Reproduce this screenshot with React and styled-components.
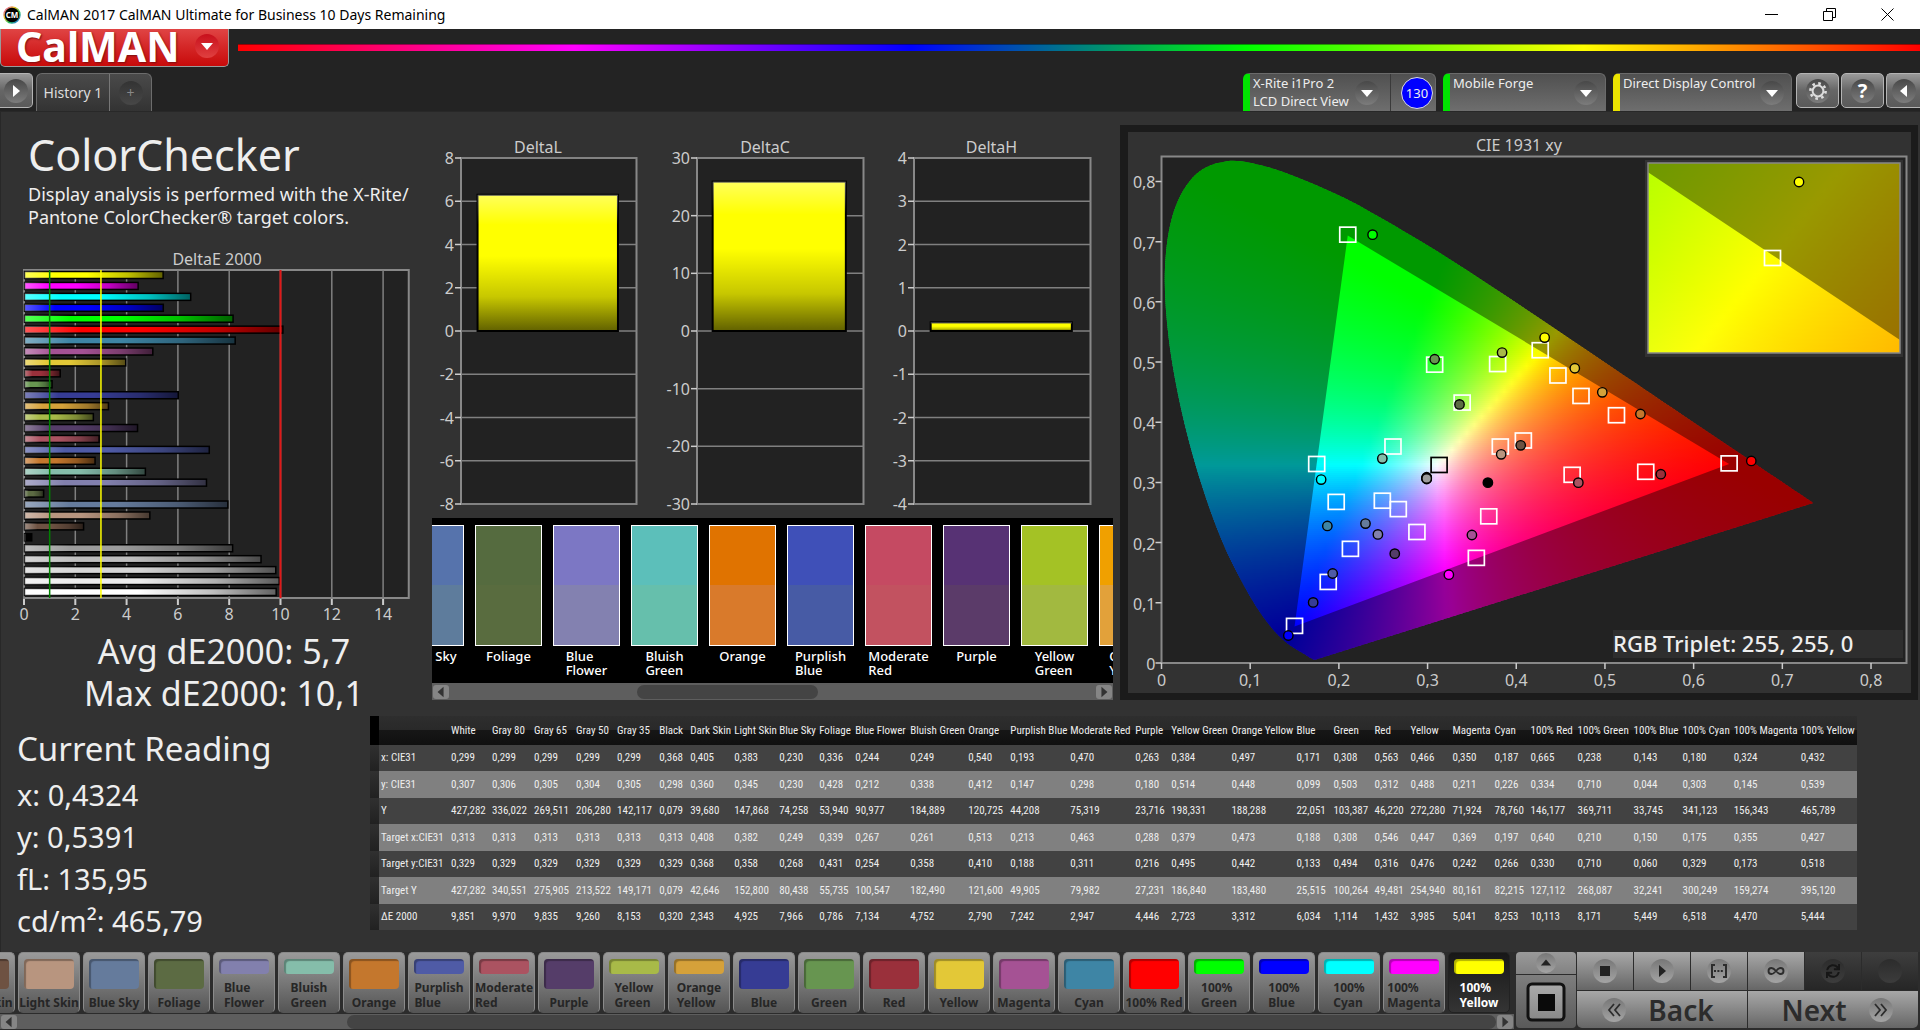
import React, {useState} from 'react';
import styled, {createGlobalStyle, css} from 'styled-components';
import {Infinity as InfinityIcon} from 'lucide-react';
import {FaSync} from 'react-icons/fa';

const GlobalStyle = createGlobalStyle`
* {
  box-sizing: border-box;
}
body {
  margin: 0;
  background: #232323;
  color: #eee;
  font-family: "Noto Sans", "Open Sans", sans-serif;
}
button {
  margin: 0;
  padding: 0;
  border: 0;
  background: none;
  color: inherit;
  font: inherit;
  cursor: pointer;
}
`;

// name, patch colour, measured x / y / Y, target x / y / Y, delta E, column width
const patches = [
    ['White', '#ffffff', '0,299', '0,307', '427,282', '0,313', '0,329', '427,282', '9,851', 41],
    ['Gray 80', '#ececec', '0,299', '0,306', '336,022', '0,313', '0,329', '340,551', '9,970', 42],
    ['Gray 65', '#d6d6d6', '0,299', '0,305', '269,511', '0,313', '0,329', '275,905', '9,835', 42],
    ['Gray 50', '#bebebe', '0,299', '0,304', '206,280', '0,313', '0,329', '213,522', '9,260', 41],
    ['Gray 35', '#9c9c9c', '0,299', '0,305', '142,117', '0,313', '0,329', '149,171', '8,153', 42],
    ['Black', '#000000', '0,368', '0,298', '0,079', '0,313', '0,329', '0,079', '0,320', 31],
    ['Dark Skin', '#6e5242', '0,405', '0,360', '39,680', '0,408', '0,368', '42,646', '2,343', 44],
    ['Light Skin', '#b8957f', '0,383', '0,345', '147,868', '0,382', '0,358', '152,800', '4,925', 45],
    ['Blue Sky', '#657b9c', '0,230', '0,230', '74,258', '0,249', '0,268', '80,438', '7,966', 40],
    ['Foliage', '#5c6b43', '0,336', '0,428', '53,940', '0,339', '0,431', '55,735', '0,786', 36],
    ['Blue Flower', '#8280ad', '0,244', '0,212', '90,977', '0,267', '0,254', '100,547', '7,134', 55],
    ['Bluish Green', '#85bdaa', '0,249', '0,338', '184,889', '0,261', '0,358', '182,490', '4,752', 58],
    ['Orange', '#c4772d', '0,540', '0,412', '120,725', '0,513', '0,410', '121,600', '2,790', 42],
    ['Purplish Blue', '#4f5ba6', '0,193', '0,147', '44,208', '0,213', '0,188', '49,905', '7,242', 60],
    ['Moderate Red', '#ab5361', '0,470', '0,298', '75,319', '0,463', '0,311', '79,982', '2,947', 65],
    ['Purple', '#553d69', '0,263', '0,180', '23,716', '0,288', '0,216', '27,231', '4,446', 36],
    ['Yellow Green', '#a8ba48', '0,384', '0,514', '198,331', '0,379', '0,495', '186,840', '2,723', 60],
    ['Orange Yellow', '#d5a13a', '0,497', '0,448', '188,288', '0,473', '0,442', '183,480', '3,312', 65],
    ['Blue', '#363c94', '0,171', '0,099', '22,051', '0,188', '0,133', '25,515', '6,034', 37],
    ['Green', '#679550', '0,308', '0,503', '103,387', '0,308', '0,494', '100,264', '1,114', 41],
    ['Red', '#9a303b', '0,563', '0,312', '46,220', '0,546', '0,316', '49,481', '1,432', 36],
    ['Yellow', '#e3c837', '0,466', '0,488', '272,280', '0,447', '0,476', '254,940', '3,985', 42],
    ['Magenta', '#a55294', '0,350', '0,211', '71,924', '0,369', '0,242', '80,161', '5,041', 42],
    ['Cyan', '#3e85a5', '0,187', '0,226', '78,760', '0,197', '0,266', '82,215', '8,253', 36],
    ['100% Red', '#ff0000', '0,665', '0,334', '146,177', '0,640', '0,330', '127,112', '10,113', 47],
    ['100% Green', '#00ff00', '0,238', '0,710', '369,711', '0,210', '0,710', '268,087', '8,171', 56],
    ['100% Blue', '#0000ff', '0,143', '0,044', '33,745', '0,150', '0,060', '32,241', '5,449', 49],
    ['100% Cyan', '#00ffff', '0,180', '0,303', '341,123', '0,175', '0,329', '300,249', '6,518', 51],
    ['100% Magenta', '#ff00ff', '0,324', '0,145', '156,343', '0,355', '0,173', '159,274', '4,470', 67],
    ['100% Yellow', '#ffff00', '0,432', '0,539', '465,789', '0,427', '0,518', '395,120', '5,444', 56],
].map(([name, color, x, y, Y, tx, ty, tY, de, width]) => ({name, color, values: [x, y, Y, tx, ty, tY, de], width}));

const rowNames = ['x: CIE31', 'y: CIE31', 'Y', 'Target x:CIE31', 'Target y:CIE31', 'Target Y', 'ΔE 2000'];

const toNumber = text => parseFloat(text.replace(',', '.'));
const toLabel = value => String(value).replace('.', ',');

/* ---------- title bar ---------- */

const Page = styled.div`
display: flex;
flex-direction: column;
min-height: 100vh;
overflow: hidden;
`;

const TitleBar = styled.div`
display: flex;
align-items: center;
height: 29px;
padding: 0 4px 0 3px;
gap: 6px;
background: #fff;
color: #000;
font-family: "Noto Sans", "Open Sans", sans-serif;
font-size: 14px;
`;

const TitleText = styled.span`
flex: 1;
white-space: nowrap;
`;

const WindowButtons = styled.div`
display: flex;
`;

const WindowButton = styled.button`
display: flex;
align-items: center;
justify-content: center;
width: 58px;
height: 29px;
`;

const AppIcon = () => (
    <svg width="18" height="18" viewBox="0 0 18 18">
        <defs>
            <linearGradient id="ring" x1="0" y1="0" x2="1" y2="1">
                <stop offset="0" stopColor="#e040c0"/>
                <stop offset="0.35" stopColor="#e8c020"/>
                <stop offset="0.65" stopColor="#20c060"/>
                <stop offset="1" stopColor="#3060ff"/>
            </linearGradient>
        </defs>
        <circle cx="9" cy="9" r="8" fill="#000" stroke="url(#ring)" strokeWidth="1.4"/>
        <text x="9" y="12" fill="#fff" fontSize="8" fontWeight="700" textAnchor="middle">CM</text>
    </svg>
);

/* ---------- header ---------- */

const Brand = styled.div`
display: flex;
align-items: center;
gap: 9px;
height: 38px;
`;

const Logo = styled.button`
display: flex;
align-items: center;
justify-content: space-between;
width: 229px;
height: 38px;
padding: 0 9px 3px 15px;
border: 1px solid #9a9a9a;
border-top: 0;
border-radius: 0 0 5px 5px;
background: linear-gradient(#e04444, #d42626 50%, #c80a0a);
color: #fff;
font-size: 41px;
font-weight: 700;
line-height: 34px;
text-shadow: 1px 1px 2px #7a1010;
`;

const Rainbow = styled.div`
flex: 1;
height: 7px;
margin-top: -1px;
background: linear-gradient(90deg, #f00, #f0f 20%, #00f 40%, #0f0 60%, #ff0 80%, #f00);
border-top: 1px solid rgba(0, 0, 0, 0.4);
`;

const Header = styled.header`
display: flex;
align-items: flex-end;
height: 44px;
padding-top: 6px;
`;

const Tabs = styled.nav`
display: flex;
flex: 1;
height: 38px;
gap: 3px;
`;

const SquareButton = styled.button`
display: flex;
align-items: center;
justify-content: center;
width: ${({$width}) => $width || 43}px;
height: 35px;
border: 1px solid #b4b4b4;
border-radius: 5px;
background: linear-gradient(#999, #666 50%, #5a5a5a);
${({$edge}) => $edge === 'left' && css`
  border-left: 0;
  border-radius: 0 5px 5px 0;
`}
${({$edge}) => $edge === 'right' && css`
  border-right: 0;
  border-radius: 5px 0 0 5px;
`}
`;

const Round = styled.span`
display: flex;
align-items: center;
justify-content: center;
flex: none;
width: ${({$size}) => $size || 24}px;
height: ${({$size}) => $size || 24}px;
border-radius: 50%;
background: ${({$tone}) => ({
    red: 'linear-gradient(#c80f1c, #e04040)',
    light: 'linear-gradient(#777, #a4a4a4)',
    dark: 'linear-gradient(#2c2c2c, #3c3c3c)',
    tab: 'linear-gradient(#333, #474747)',
}[$tone] || 'linear-gradient(#484848, #7c7c7c)')};
`;

const TabGroup = styled.div`
display: flex;
border: 1px solid #6c6c6c;
border-bottom: 0;
border-radius: 6px 6px 0 0;
background: linear-gradient(#4a4a4a, #333);
color: #ddd;
font-size: 14px;
`;

const Tab = styled.button`
width: 73px;
border-right: 1px solid #777;
`;

const AddTab = styled.button`
display: flex;
align-items: center;
justify-content: center;
width: 41px;
color: #888;
`;

const Devices = styled.div`
display: flex;
height: 38px;
gap: 7px;
`;

const Device = styled.div`
display: flex;
width: ${({$width}) => $width}px;
border: 1px solid #6a6a6a;
border-bottom: 0;
border-left: 7px solid ${({$state}) => $state};
border-radius: 6px 6px 0 0;
background: linear-gradient(#505050, #6e6e6e);
`;

const DeviceMenu = styled.button`
display: flex;
flex: 1;
align-items: center;
justify-content: space-between;
padding: 0 7px 0 3px;
font-size: 13px;
line-height: 18px;
text-align: left;
white-space: nowrap;
`;

const DeviceLabel = styled.span`
align-self: flex-start;
`;

const MeterCount = styled.div`
display: flex;
align-items: center;
justify-content: flex-end;
width: 45px;
margin-left: 4px;
padding-right: 2px;
border-left: 1px solid #3a3a3a;
`;

const Counter = styled.span`
width: 32px;
height: 32px;
border: 1px solid #ddd;
border-radius: 50%;
background: #00f;
font-size: 13px;
line-height: 30px;
text-align: center;
`;

const ToolButtons = styled.div`
display: flex;
align-self: flex-start;
gap: 2px;
margin-left: 4px;
`;

const Triangle = ({dir = 'down', color = '#fff', size = 14}) => {
    const turn = {down: 0, left: 90, up: 180, right: 270}[dir];
    return <svg width={size} height={size} viewBox="0 0 14 14">
        <path d="M1 4h12L7 11z" fill={color} transform={`rotate(${turn} 7 7)`}/>
    </svg>;
};

const Gear = () => (
    <svg width="22" height="22" viewBox="0 0 22 22" fill="none" stroke="#ddd">
        <circle cx="11" cy="11" r="5.4" strokeWidth="2"/>
        <circle cx="11" cy="11" r="7.6" strokeWidth="2.6" strokeDasharray="2.6 3.37"/>
    </svg>
);

const Question = styled.span`
color: #fff;
font-size: 20px;
font-weight: 700;
line-height: 24px;
`;

/* ---------- workspace ---------- */

const Main = styled.main`
flex: 1;
background: #323232;
box-shadow: inset 1px 1px 0 #282828;
`;

const Upper = styled.div`
display: grid;
grid-template-columns: minmax(0, 432fr) minmax(0, 681fr) minmax(0, 807fr);
align-items: start;
`;

const Chart = styled.svg`
display: block;
width: 100%;
height: auto;
font-size: 16px;
fill: #ccc;
`;

const Summary = styled.section`
padding-top: 18px;
`;

const Title = styled.h1`
margin: 0 0 2px 28px;
font-size: 43px;
font-weight: 400;
line-height: 52px;
`;

const Intro = styled.p`
margin: 0 0 16px 28px;
font-size: 18px;
line-height: 23px;
white-space: nowrap;
`;

const Average = styled.div`
padding-left: 16px;
font-size: 34px;
line-height: 42px;
text-align: center;
`;

const DeltaEChart = () => {
    const left = 24;
    const unit = 25.65;
    const top = 25;
    return <Chart viewBox="0 0 432 385" role="img" aria-label="DeltaE 2000">
        <defs>
            <linearGradient id="sheenX">
                <stop offset="0" stopColor="#fff" stopOpacity="0.35"/>
                <stop offset="0.22" stopColor="#fff" stopOpacity="0"/>
                <stop offset="0.45" stopColor="#000" stopOpacity="0"/>
                <stop offset="0.75" stopColor="#000" stopOpacity="0.25"/>
                <stop offset="1" stopColor="#000" stopOpacity="0.62"/>
            </linearGradient>
        </defs>
        <text x="217" y="20" textAnchor="middle">DeltaE 2000</text>
        <rect x={left} y={top} width={unit * 15} height="328" fill="#222" stroke="#888" strokeWidth="2"/>
        {[0, 2, 4, 6, 8, 10, 12, 14].map(tick => {
            const x = left + tick * unit;
            return <g key={tick}>
                <path d={`M${x} ${top}V${top + 328}`} stroke="#808080" strokeWidth="1.5"/>
                <path d={`M${x} ${top + 329}v6`} stroke="#ccc" strokeWidth="2"/>
                <text x={x} y="375" textAnchor="middle">{tick}</text>
            </g>;
        })}
        {[...patches].reverse().map(({name, color, values}, i) => {
            const box = {x: left + 0.5, y: top + 1.5 + i * 10.93, width: toNumber(values[6]) * unit - 1, height: 7};
            return <g key={name}>
                <rect {...box} fill={color} stroke="#000" strokeWidth="1.5"/>
                <rect {...box} fill="url(#sheenX)"/>
            </g>;
        })}
        <path d={`M${left + unit} ${top}v328`} stroke="#008000" strokeWidth="1.5"/>
        <path d={`M${left + unit * 3} ${top}v328`} stroke="#ff0" strokeWidth="1.5"/>
        <path d={`M${left + unit * 10} ${top}v328`} stroke="#e01818" strokeWidth="2"/>
    </Chart>;
};

const DeltaSection = styled.section`
padding-top: 25px;
`;

const deltas = [
    {name: 'DeltaL', title: 106, left: 29, right: 204.5, max: 8, step: 2, value: 6.3},
    {name: 'DeltaC', title: 333, left: 265, right: 431.5, max: 30, step: 10, value: 25.9},
    {name: 'DeltaH', title: 559.5, left: 482, right: 658.5, max: 4, step: 1, value: 0.2},
];

const DeltaCharts = () => {
    const zero = 195;
    const half = 173;
    return <Chart viewBox="0 0 681 382" role="img" aria-label="DeltaL, DeltaC and DeltaH">
        <defs>
            <linearGradient id="sheenY" x2="0" y2="1">
                <stop offset="0" stopColor="#fff" stopOpacity="0.36"/>
                <stop offset="0.22" stopColor="#fff" stopOpacity="0"/>
                <stop offset="0.45" stopColor="#000" stopOpacity="0"/>
                <stop offset="0.75" stopColor="#000" stopOpacity="0.22"/>
                <stop offset="1" stopColor="#000" stopOpacity="0.62"/>
            </linearGradient>
        </defs>
        {deltas.map(({name, title, left, right, max, step, value}) => {
            const width = right - left;
            const ticks = [];
            for (let v = -max; v <= max; v += step) ticks.push(v);
            const height = value / max * half;
            const box = {x: left + width * 0.1 - 1, y: zero - height, width: width * 0.8, height};
            return <g key={name}>
                <text x={title} y="17" textAnchor="middle">{name}</text>
                <rect x={left} y={zero - half} width={width} height={half * 2} fill="#222" stroke="#888" strokeWidth="2"/>
                {ticks.map(v => {
                    const y = zero - v / max * half;
                    return <g key={v}>
                        <path d={`M${left} ${y}H${right}`} stroke="#808080" strokeWidth="1.5"/>
                        <path d={`M${left - 6} ${y}h6`} stroke="#ccc" strokeWidth="1.5"/>
                        <text x={left - 7} y={y + 6} textAnchor="end">{v}</text>
                    </g>;
                })}
                <rect {...box} fill="#ff0" stroke="#000" strokeWidth="2"/>
                <rect {...box} fill="url(#sheenY)"/>
            </g>;
        })}
    </Chart>;
};

const strip = [
    ['Blue Sky', '#5673ac', '#5e7c9c'],
    ['Foliage', '#556b3f', '#596c3f'],
    ['Blue\nFlower', '#7c77c4', '#8381b0'],
    ['Bluish\nGreen', '#5cbfba', '#66bfac'],
    ['Orange', '#e07300', '#d97a2b'],
    ['Purplish\nBlue', '#3f50b8', '#475ba5'],
    ['Moderate\nRed', '#c54a62', '#c25260'],
    ['Purple', '#573274', '#5b3b69'],
    ['Yellow\nGreen', '#a4c225', '#a2b940'],
    ['Orange\nYellow', '#f0a000', '#e2a13a'],
];

const Strip = styled.div`
height: 165px;
overflow: hidden;
background: #000;
`;

const StripList = styled.div`
display: flex;
gap: 11px;
margin-left: -35px;
padding-top: 7px;
`;

const Swatch = styled.div`
display: flex;
flex: 0 0 67px;
flex-direction: column;
align-items: center;
color: #fff;
font-size: 13px;
font-weight: 500;
line-height: 14px;
white-space: pre;
`;

const SwatchColor = styled.div`
width: 100%;
height: 121px;
margin-bottom: 3px;
border: 1px solid #fff;
background: linear-gradient(${({$top}) => $top} 50%, ${({$bottom}) => $bottom} 50%);
`;

const Track = styled.div`
display: flex;
align-items: center;
justify-content: space-between;
height: ${({$height}) => $height}px;
padding: 0 1px;
background: #5e5e5e;
`;

const TrackButton = styled.button`
display: flex;
align-items: center;
justify-content: center;
width: 16px;
height: 14px;
border-radius: 3px;
background: #858585;
`;

const Thumb = styled.div`
width: ${({$width}) => $width};
height: 14px;
margin: 0 ${({$end}) => $end} 0 auto;
border-radius: 7px;
background: #444;
`;

const Scroll = ({height, width, end}) => (
    <Track $height={height}>
        <TrackButton aria-label="Scroll left"><Triangle dir="left" color="#333" size={12}/></TrackButton>
        <Thumb $width={width} $end={end}/>
        <TrackButton aria-label="Scroll right"><Triangle dir="right" color="#333" size={12}/></TrackButton>
    </Track>
);

/* ---------- chromaticity diagram ---------- */

const locus = [
    [0.1741, 0.005], [0.1714, 0.0051], [0.1689, 0.0069], [0.1644, 0.0109], [0.1566, 0.0177], [0.144, 0.0297],
    [0.1355, 0.0399], [0.1241, 0.0578], [0.1096, 0.0868], [0.0913, 0.1327], [0.0687, 0.2007], [0.0454, 0.295],
    [0.0235, 0.4127], [0.0082, 0.5384], [0.0039, 0.6548], [0.0139, 0.7502], [0.0389, 0.812], [0.0743, 0.8338],
    [0.1142, 0.8262], [0.1547, 0.8059], [0.1929, 0.7816], [0.2296, 0.7543], [0.3016, 0.6923], [0.3731, 0.6245],
    [0.4441, 0.5547], [0.5125, 0.4866], [0.5752, 0.4242], [0.627, 0.3725], [0.6658, 0.334], [0.6915, 0.3083],
    [0.719, 0.2809], [0.7347, 0.2653],
];
const gamut = [[0.64, 0.33], [0.21, 0.71], [0.15, 0.06]];

// linear sRGB, clipped and scaled so that the strongest channel is full
const xyToRgb = (x, y) => {
    const z = 1 - x - y;
    const rgb = [
        3.2406 * x - 1.5372 * y - 0.4986 * z,
        -0.9689 * x + 1.8758 * y + 0.0415 * z,
        0.0557 * x - 0.204 * y + 1.057 * z,
    ].map(v => Math.max(v, 0));
    const peak = Math.max(...rgb);
    return `rgb(${rgb.map(v => Math.round(255 * v / peak)).join(',')})`;
};

// Catmull-Rom through the spectral locus, closed by the purple line
const locusPath = (px, py) => {
    const pts = locus.map(([x, y]) => [px(x), py(y)]);
    let d = `M${pts[0]}`;
    for (let i = 0; i < pts.length - 1; i++) {
        const a = pts[i - 1] || pts[i];
        const b = pts[i];
        const c = pts[i + 1];
        const e = pts[i + 2] || c;
        d += `C${b[0] + (c[0] - a[0]) / 6} ${b[1] + (c[1] - a[1]) / 6} ${c[0] - (e[0] - b[0]) / 6} ${c[1] - (e[1] - b[1]) / 6} ${c}`;
    }
    return d + 'Z';
};

const Spectrum = ({id, x, y, width, height, xMin, xMax, yMin, yMax, stops}) => {
    const px = v => x + (v - xMin) / (xMax - xMin) * width;
    const py = v => y + height - (v - yMin) / (yMax - yMin) * height;
    const rows = Array.from({length: Math.ceil(height / 2)}, (_, i) => i);
    const shape = locusPath(px, py);
    return <g>
        <defs>
            <clipPath id={`${id}-locus`}><path d={shape}/></clipPath>
            <clipPath id={`${id}-frame`}><rect x={x} y={y} width={width} height={height}/></clipPath>
            {rows.map(row => {
                const cy = yMax - (row * 2 + 1) / height * (yMax - yMin);
                return <linearGradient id={`${id}-${row}`} key={row}>
                    {Array.from({length: stops + 1}, (_, i) => (
                        <stop key={i} offset={i / stops} stopColor={xyToRgb(xMin + i / stops * (xMax - xMin), cy)}/>
                    ))}
                </linearGradient>;
            })}
        </defs>
        <g clipPath={`url(#${id}-frame)`}>
            <g clipPath={`url(#${id}-locus)`}>
                {rows.map(row => (
                    <rect key={row} x={x} y={y + row * 2} width={width} height="2.5" fill={`url(#${id}-${row})`}/>
                ))}
            </g>
            <path d={`${shape}M${gamut.map(([gx, gy]) => [px(gx), py(gy)]).join('L')}Z`}
                  fill="#000" fillOpacity="0.4" fillRule="evenodd"/>
        </g>
    </g>;
};

const CiePanel = styled.section`
margin: 14px 2px 0 7px;
padding: 7px 7px 7px 8px;
background: #1b1b1b;
`;

const CieSvg = styled(Chart)`
background: #323232;
`;

const Target = ({x, y, color = '#fff'}) => (
    <rect x={x - 8} y={y - 7.5} width="16" height="15" fill="none" stroke={color} strokeWidth="1.7"/>
);

const CieChart = () => {
    const left = 33.5;
    const top = 24.5;
    const width = 745;
    const height = 506.5;
    const bottom = top + height;
    const px = v => left + v * 886.9;
    const py = v => bottom - v * 601.9;
    const ticks = [0, 0.1, 0.2, 0.3, 0.4, 0.5, 0.6, 0.7, 0.8];
    return <CieSvg viewBox="0 0 783 561" role="img" aria-label="CIE 1931 xy">
        <text x="391" y="19" textAnchor="middle">CIE 1931 xy</text>
        <rect x={left} y={top} width={width} height={height} fill="#222" stroke="#888" strokeWidth="2"/>
        {ticks.map(t => <g key={t}>
            <path d={`M${px(t)} ${bottom}v6M${left - 6} ${py(t)}h6`} stroke="#ccc" strokeWidth="1.5"/>
            <text x={px(t)} y="554" textAnchor="middle">{toLabel(t)}</text>
            <text x={left - 6} y={py(t) + 7} textAnchor="end">{toLabel(t)}</text>
        </g>)}
        <Spectrum id="cie" x={left} y={top + 0.5} width={width} height={height - 1} stops={100}
                  xMin={0} xMax={width / 886.9} yMin={0} yMax={(height - 0.5) / 601.9}/>
        {patches.slice(6).map(({name, values}) => (
            <Target key={name} x={px(toNumber(values[3]))} y={py(toNumber(values[4])) - 1}/>
        ))}
        <Target x={px(0.313)} y={py(0.329)} color="#000"/>
        {patches.map(({name, color, values}) => (
            <circle key={name} cx={px(toNumber(values[0]))} cy={py(toNumber(values[1])) - 1} r="4.7"
                    fill={color} stroke="#000" strokeWidth="1.4"/>
        ))}
        <rect x="517" y="28" width="258" height="197" fill="#323232"/>
        <Spectrum id="inset" x={520} y={31} width={252} height={190} stops={40}
                  xMin={0.4036} xMax={0.451} yMin={0.4938} yMax={0.5412}/>
        <rect x="520" y="31" width="252" height="190" fill="none" stroke="#888" strokeWidth="1.5"/>
        <Target x={644.5} y={126}/>
        <circle cx="671" cy="50" r="4.7" fill="#ff0" stroke="#000" strokeWidth="1.4"/>
        <rect x="485" y="498" width="290" height="28" fill="#2e2e2e"/>
        <text x="485" y="520" fontSize="22" fontWeight="500" fill="#eee">RGB Triplet: 255, 255, 0</text>
    </CieSvg>;
};

/* ---------- readings and table ---------- */

const Lower = styled.div`
display: grid;
grid-template-columns: 370px 1fr;
align-items: start;
padding-top: 2px;
`;

const Reading = styled.section`
padding: 8px 0 0 17px;
font-size: 29px;
line-height: 42px;
`;

const ReadingTitle = styled.h2`
margin: 0;
font-size: 33px;
font-weight: 400;
line-height: 50px;
`;

const DataTable = styled.table`
width: 1487px;
border-collapse: collapse;
table-layout: fixed;
font-family: "Roboto Condensed", Roboto, "Noto Sans", sans-serif;
font-size: 11px;
line-height: 16px;
text-align: left;
white-space: nowrap;

th, td {
  padding: 0;
  font-weight: 400;
}
thead tr {
  height: 29px;
  background: linear-gradient(#2e2e2e, #292929 48%, #161616 50%, #101010);
}
thead td:first-child {
  background: #000;
}
tbody tr {
  height: 26px;
  background: #424242;
}
tbody tr:nth-child(even) {
  height: 27px;
  background: #808080;
}
tbody td:first-child {
  background: linear-gradient(#303030, #212121);
}
tbody th {
  padding-left: 2px;
}
`;

const Readings = () => (
    <DataTable>
        <colgroup>
            <col style={{width: 9}}/>
            <col style={{width: 72}}/>
            {patches.map(({name, width}) => <col key={name} style={{width}}/>)}
        </colgroup>
        <thead>
        <tr>
            <td/>
            <td/>
            {patches.map(({name}) => <th key={name} scope="col">{name}</th>)}
        </tr>
        </thead>
        <tbody>
        {rowNames.map((row, i) => <tr key={row}>
            <td/>
            <th scope="row">{row}</th>
            {patches.map(({name, values}) => <td key={name}>{values[i]}</td>)}
        </tr>)}
        </tbody>
    </DataTable>
);

/* ---------- bottom bar ---------- */

const Footer = styled.footer`
display: flex;
gap: 2px;
height: 78px;
padding-right: 2px;
background: #2c2c2c;
`;

const PatchArea = styled.div`
flex: 1;
min-width: 0;
`;

const PatchList = styled.div`
display: flex;
justify-content: flex-end;
gap: 3px;
height: 62px;
padding: 0 4px 1px 0;
overflow: hidden;
`;

const PatchButton = styled.button`
display: flex;
flex: 0 0 62px;
flex-direction: column;
align-items: center;
justify-content: space-between;
padding: 6px 0 2px;
border: 1px solid #8a8a8a;
border-bottom-color: #555;
border-radius: 5px;
background: linear-gradient(#9a9a9a, #555);
color: #262626;
font-size: 12px;
font-weight: 700;
line-height: 15px;
text-align: left;
white-space: pre;
${({$selected}) => $selected && css`
  border-color: #222;
  background: linear-gradient(#181818, #343434);
  color: #fff;
`}
`;

const Chip = styled.span`
width: 50px;
height: ${({$short}) => $short ? 15 : 30}px;
border-radius: 4px;
background: ${({$color}) => $color};
box-shadow: inset 2px 2px 1px rgba(0, 0, 0, 0.3);
`;

const PatchLabel = styled.span`
display: block;
`;

const Side = styled.div`
display: flex;
flex-direction: column;
flex: 0 0 60px;
gap: 1px;
padding-bottom: 2px;
`;

const SideButton = styled.button`
display: flex;
align-items: center;
justify-content: center;
height: ${({$tall}) => $tall ? 53 : 22}px;
border-radius: ${({$tall}) => $tall ? '0 0 4px 4px' : '4px 4px 0 0'};
background: ${({$tall}) => $tall ? 'linear-gradient(#7e7e7e, #5a5a5a)' : 'linear-gradient(#9a9a9a, #828282)'};
`;

const PatternIcon = () => (
    <svg width="40" height="40" viewBox="0 0 40 40">
        <defs>
            <linearGradient id="pattern" x2="0" y2="1">
                <stop offset="0" stopColor="#aaa"/>
                <stop offset="1" stopColor="#888"/>
            </linearGradient>
        </defs>
        <rect x="2" y="2" width="36" height="36" rx="4" fill="url(#pattern)" stroke="#111" strokeWidth="3"/>
        <rect x="12" y="12" width="17" height="17" fill="#0a0a0a"/>
    </svg>
);

const Transport = styled.div`
display: grid;
grid-template-columns: repeat(6, 1fr);
grid-template-rows: 38px 37px;
gap: 1px;
flex: 0 0 341px;
margin-left: -1px;
`;

const TransportButton = styled.button`
display: flex;
align-items: center;
justify-content: center;
background: ${({disabled}) => disabled ? 'linear-gradient(#3e3e3e, #262626)' : 'linear-gradient(#a8a8a8, #666)'};
color: #2c2c2c;
`;

const NavButton = styled(TransportButton)`
grid-column: span 3;
gap: 22px;
padding: ${({$last}) => $last ? '0 0 0 8px' : '0 8px 0 0'};
border-radius: ${({$last}) => $last ? '0 0 5px 0' : '0 0 0 5px'};
font-size: 28px;
font-weight: 600;
line-height: 36px;
`;

const RangeIcon = () => (
    <svg width="18" height="16" viewBox="0 0 18 16" fill="none" stroke="#2c2c2c" strokeWidth="2">
        <path d="M5 2H2v12h3M13 2h3v12h-3"/>
        <path d="M4 8h10" strokeDasharray="2 1.4"/>
    </svg>
);

const Chevrons = ({flip}) => (
    <svg width="16" height="16" viewBox="0 0 16 16" fill="none" stroke="#2c2c2c" strokeWidth="1.8">
        <path d="M8 2L3 8l5 6M14 2L9 8l5 6" transform={flip ? 'rotate(180 8 8)' : undefined}/>
    </svg>
);

const twoLines = name => /^100% Red$|^(Light|Dark) Skin$|^Blue Sky$/.test(name) ? name : name.replace(' ', '\n');

export default () => {
    const [selected, setSelected] = useState('100% Yellow');

    return <Page>
        <GlobalStyle/>
        <TitleBar>
            <AppIcon/>
            <TitleText>CalMAN 2017 CalMAN Ultimate for Business 10 Days Remaining</TitleText>
            <WindowButtons>
                <WindowButton aria-label="Minimize">
                    <svg width="13" height="13"><path d="M0 6.5h13" stroke="#000"/></svg>
                </WindowButton>
                <WindowButton aria-label="Restore">
                    <svg width="13" height="13" fill="none" stroke="#000">
                        <path d="M0.5 3.5h9v9h-9zM3.5 3v-2.5h9v9h-3"/>
                    </svg>
                </WindowButton>
                <WindowButton aria-label="Close">
                    <svg width="13" height="13"><path d="M0.5 0.5l12 12M12.5 0.5l-12 12" stroke="#000"/></svg>
                </WindowButton>
            </WindowButtons>
        </TitleBar>
        <Brand>
            <Logo>CalMAN <Round $tone="red"><Triangle/></Round></Logo>
            <Rainbow/>
        </Brand>
        <Header>
            <Tabs>
                <SquareButton $width={33} $edge="left" aria-label="Expand">
                    <Round><Triangle dir="right"/></Round>
                </SquareButton>
                <TabGroup>
                    <Tab>History 1</Tab>
                    <AddTab aria-label="Add tab"><Round $tone="tab">+</Round></AddTab>
                </TabGroup>
            </Tabs>
            <Devices>
                <Device $width={193} $state="#00e400">
                    <DeviceMenu aria-haspopup="menu">
                        <DeviceLabel>X-Rite i1Pro 2<br/>LCD Direct View</DeviceLabel>
                        <Round><Triangle/></Round>
                    </DeviceMenu>
                    <MeterCount><Counter>130</Counter></MeterCount>
                </Device>
                <Device $width={163} $state="#00e400">
                    <DeviceMenu aria-haspopup="menu">
                        <DeviceLabel>Mobile Forge</DeviceLabel>
                        <Round><Triangle/></Round>
                    </DeviceMenu>
                </Device>
                <Device $width={179} $state="#ece400">
                    <DeviceMenu aria-haspopup="menu">
                        <DeviceLabel>Direct Display Control</DeviceLabel>
                        <Round><Triangle/></Round>
                    </DeviceMenu>
                </Device>
            </Devices>
            <ToolButtons>
                <SquareButton aria-label="Settings"><Round><Gear/></Round></SquareButton>
                <SquareButton aria-label="Help"><Round><Question>?</Question></Round></SquareButton>
                <SquareButton $width={34} $edge="right" aria-label="Collapse">
                    <Round><Triangle dir="left"/></Round>
                </SquareButton>
            </ToolButtons>
        </Header>
        <Main>
            <Upper>
                <Summary>
                    <Title>ColorChecker</Title>
                    <Intro>Display analysis is performed with the X-Rite/<br/>Pantone ColorChecker® target colors.</Intro>
                    <DeltaEChart/>
                    <Average>Avg dE2000: 5,7<br/>Max dE2000: 10,1</Average>
                </Summary>
                <DeltaSection>
                    <DeltaCharts/>
                    <Strip>
                        <StripList>
                            {strip.map(([name, top, bottom]) => <Swatch key={name}>
                                <SwatchColor $top={top} $bottom={bottom}/>
                                <span>{name}</span>
                            </Swatch>)}
                        </StripList>
                    </Strip>
                    <Scroll height={17} width="181px" end="41%"/>
                </DeltaSection>
                <CiePanel>
                    <CieChart/>
                </CiePanel>
            </Upper>
            <Lower>
                <Reading>
                    <ReadingTitle>Current Reading</ReadingTitle>
                    <div>x: 0,4324</div>
                    <div>y: 0,5391</div>
                    <div>fL: 135,95</div>
                    <div>cd/m²: 465,79</div>
                </Reading>
                <Readings/>
            </Lower>
        </Main>
        <Footer>
            <PatchArea>
                <PatchList>
                    {patches.slice(6).map(({name, color}) => {
                        const label = twoLines(name);
                        return <PatchButton key={name} $selected={selected === name} onClick={() => setSelected(name)}>
                            <Chip $color={color} $short={label.includes('\n')}/>
                            <PatchLabel>{label}</PatchLabel>
                        </PatchButton>;
                    })}
                </PatchList>
                <Scroll height={15} width="76%" end="1px"/>
            </PatchArea>
            <Side>
                <SideButton aria-label="Expand patterns"><Round $tone="light" $size={20}><Triangle dir="up" color="#222" size={12}/></Round></SideButton>
                <SideButton $tall aria-label="Pattern window"><PatternIcon/></SideButton>
            </Side>
            <Transport>
                <TransportButton aria-label="Stop">
                    <Round $tone="light"><svg width="10" height="10"><path d="M0 0h10v10H0z" fill="#222"/></svg></Round>
                </TransportButton>
                <TransportButton aria-label="Play">
                    <Round $tone="light"><Triangle dir="right" color="#222"/></Round>
                </TransportButton>
                <TransportButton aria-label="Read series"><Round $tone="light"><RangeIcon/></Round></TransportButton>
                <TransportButton aria-label="Read continuous">
                    <Round $tone="light"><InfinityIcon size={18} strokeWidth={2.5}/></Round>
                </TransportButton>
                <TransportButton disabled aria-label="Refresh">
                    <Round $tone="dark"><FaSync size={14} color="#161616"/></Round>
                </TransportButton>
                <TransportButton disabled aria-label="Empty"><Round $tone="dark"/></TransportButton>
                <NavButton><Round $tone="light"><Chevrons/></Round>Back</NavButton>
                <NavButton $last>Next<Round $tone="light"><Chevrons flip/></Round></NavButton>
            </Transport>
        </Footer>
    </Page>;
}
